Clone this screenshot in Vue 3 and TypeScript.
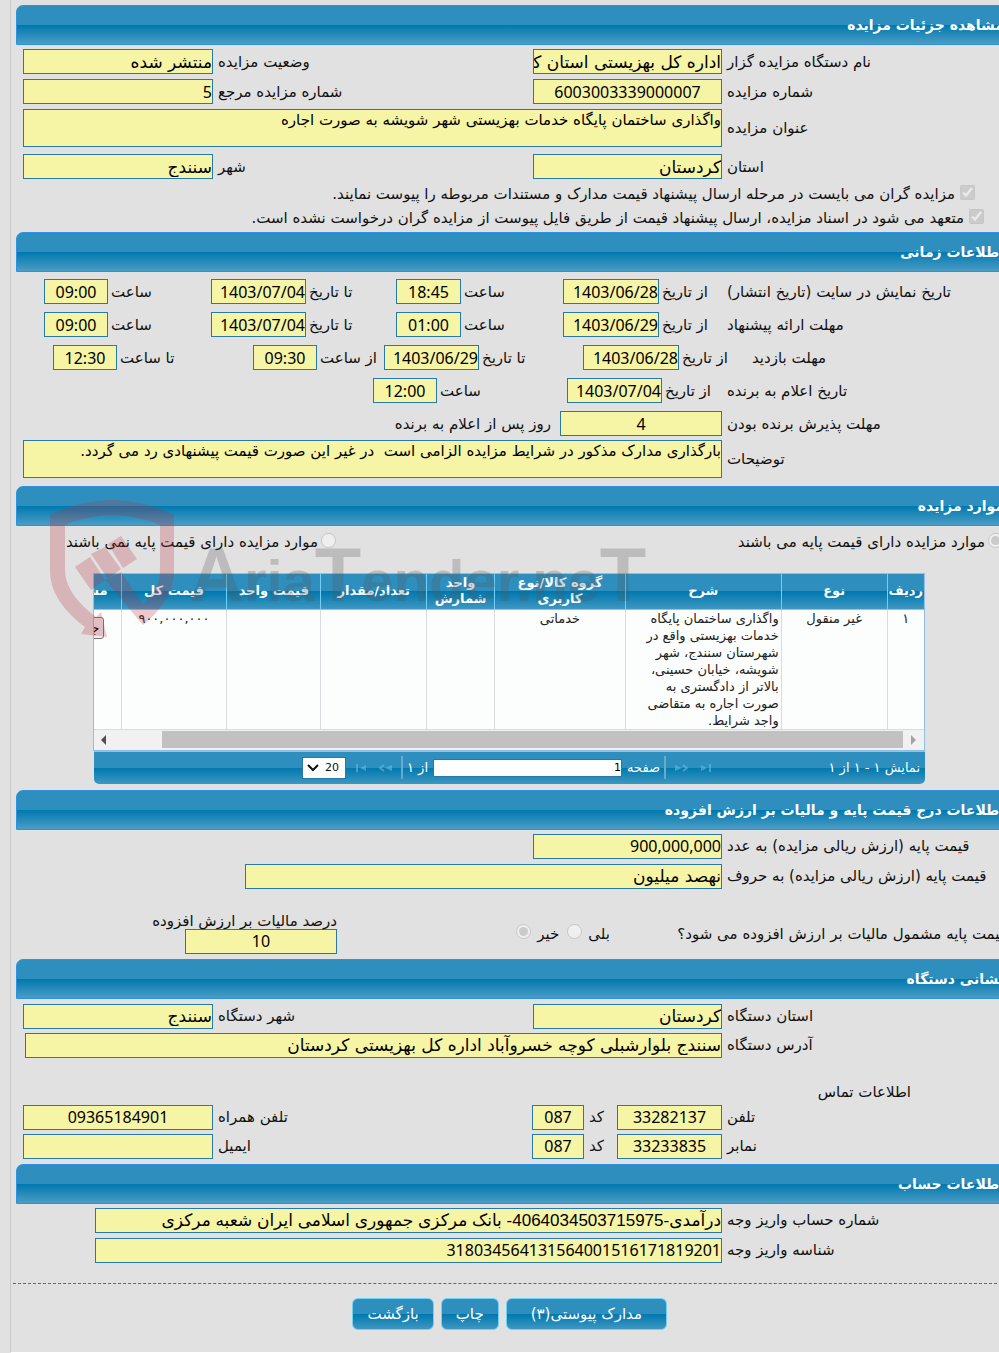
<script setup lang="ts">
interface Field {
  label: string
  value: string
  kind?: 'center' | 'area' | 'date' | 'digits' | 'mixed'
}
interface Row {
  layout: string
  fields: Field[]
  suffix?: string
}

const general: Row[] = [
  {
    layout: 'pair',
    fields: [
      { label: 'نام دستگاه مزایده گزار', value: 'اداره کل بهزیستی استان کردستان' },
      { label: 'وضعیت مزایده', value: 'منتشر شده' },
    ],
  },
  {
    layout: 'pair',
    fields: [
      { label: 'شماره مزایده', value: '6003003339000007', kind: 'center' },
      { label: 'شماره مزایده مرجع', value: '5', kind: 'digits' },
    ],
  },
  {
    layout: 'wide',
    fields: [{ label: 'عنوان مزایده', value: 'واگذاری ساختمان پایگاه خدمات بهزیستی شهر شویشه به صورت اجاره', kind: 'area' }],
  },
  {
    layout: 'pair spaced',
    fields: [
      { label: 'استان', value: 'کردستان' },
      { label: 'شهر', value: 'سنندج' },
    ],
  },
]

const times: Row[] = [
  {
    layout: 'span',
    fields: [
      { label: 'از تاریخ', value: '1403/06/28', kind: 'date' },
      { label: 'ساعت', value: '18:45', kind: 'center' },
      { label: 'تا تاریخ', value: '1403/07/04', kind: 'date' },
      { label: 'ساعت', value: '09:00', kind: 'center' },
    ],
  },
  {
    layout: 'span',
    fields: [
      { label: 'از تاریخ', value: '1403/06/29', kind: 'date' },
      { label: 'ساعت', value: '01:00', kind: 'center' },
      { label: 'تا تاریخ', value: '1403/07/04', kind: 'date' },
      { label: 'ساعت', value: '09:00', kind: 'center' },
    ],
  },
  {
    layout: 'visit',
    fields: [
      { label: 'از تاریخ', value: '1403/06/28', kind: 'date' },
      { label: 'تا تاریخ', value: '1403/06/29', kind: 'date' },
      { label: 'از ساعت', value: '09:30', kind: 'center' },
      { label: 'تا ساعت', value: '12:30', kind: 'center' },
    ],
  },
  {
    layout: 'announce',
    fields: [
      { label: 'از تاریخ', value: '1403/07/04', kind: 'date' },
      { label: 'ساعت', value: '12:00', kind: 'center' },
    ],
  },
]
const timeTitles = ['تاریخ نمایش در سایت (تاریخ انتشار)', 'مهلت ارائه پیشنهاد', 'مهلت بازدید', 'تاریخ اعلام به برنده']

const notes: Row[] = [
  {
    layout: 'accept',
    fields: [{ label: 'مهلت پذیرش برنده بودن', value: '4', kind: 'center' }],
    suffix: 'روز پس از اعلام به برنده',
  },
  {
    layout: 'wide',
    fields: [
      {
        label: 'توضیحات',
        value: 'بارگذاری مدارک مذکور در شرایط مزایده الزامی است  در غیر این صورت قیمت پیشنهادی رد می گردد.',
        kind: 'area',
      },
    ],
  },
]

const prices: Row[] = [
  { layout: 'single', fields: [{ label: 'قیمت پایه (ارزش ریالی مزایده) به عدد', value: '900,000,000', kind: 'digits' }] },
  { layout: 'words', fields: [{ label: 'قیمت پایه (ارزش ریالی مزایده) به حروف', value: 'نهصد میلیون' }] },
]

const address: Row[] = [
  {
    layout: 'pair',
    fields: [
      { label: 'استان دستگاه', value: 'کردستان' },
      { label: 'شهر دستگاه', value: 'سنندج' },
    ],
  },
  {
    layout: 'street',
    fields: [{ label: 'آدرس دستگاه', value: 'سنندج بلوارشبلی کوچه خسروآباد اداره کل بهزیستی کردستان' }],
  },
]

const contact: Row[] = [
  {
    layout: 'phone',
    fields: [
      { label: 'تلفن', value: '33282137', kind: 'center' },
      { label: 'کد', value: '087', kind: 'center' },
      { label: 'تلفن همراه', value: '09365184901', kind: 'center' },
    ],
  },
  {
    layout: 'phone',
    fields: [
      { label: 'نمابر', value: '33233835', kind: 'center' },
      { label: 'کد', value: '087', kind: 'center' },
      { label: 'ایمیل', value: '', kind: 'center' },
    ],
  },
]

const account: Row[] = [
  {
    layout: 'deposit',
    fields: [
      {
        label: 'شماره حساب واریز وجه',
        value: 'درآمدی-4064034503715975- بانک مرکزی جمهوری اسلامی ایران شعبه مرکزی',
        kind: 'mixed',
      },
    ],
  },
  { layout: 'deposit', fields: [{ label: 'شناسه واریز وجه', value: '318034564131564001516171819201', kind: 'digits' }] },
]

const groups = { general, notes, prices, address, contact, account }
type GroupName = keyof typeof groups
interface Block {
  title: string
  name: string
  parts: GroupName[]
}
const blocks: Block[] = [
  { title: 'مشاهده جزئیات مزایده', name: 'general', parts: ['general'] },
  { title: 'اطلاعات زمانی', name: 'times', parts: ['notes'] },
  { title: 'موارد مزایده', name: 'items', parts: [] },
  { title: 'اطلاعات درج قیمت پایه و مالیات بر ارزش افزوده', name: 'price', parts: ['prices'] },
  { title: 'نشانی دستگاه', name: 'address', parts: ['address', 'contact'] },
  { title: 'اطلاعات حساب', name: 'account', parts: ['account'] },
]

const columns = [
  { title: 'ردیف', width: 37, value: '۱' },
  { title: 'نوع', width: 106, value: 'غیر منقول' },
  {
    title: 'شرح',
    width: 156,
    value:
      'واگذاری ساختمان پایگاه خدمات بهزیستی واقع در شهرستان سنندج، شهر شویشه، خیابان حسینی، بالاتر از دادگستری به صورت اجاره به متقاضی واجد شرایط.',
  },
  { title: 'گروه کالا/نوع کاربری', width: 131, value: 'خدماتی' },
  { title: 'واحد شمارش', width: 68, value: '' },
  { title: 'تعداد/مقدار', width: 106, value: '' },
  { title: 'قیمت واحد', width: 94, value: '' },
  { title: 'قیمت کل', width: 106, value: '۹۰۰,۰۰۰,۰۰۰' },
  { title: 'مشاهده', width: 27, value: '' },
]
const total = columns.reduce((sum, c) => sum + c.width, 0)
</script>

<template>
  <div class="page" dir="rtl">
    <main class="sheet">
      <section v-for="b in blocks" :key="b.name" :class="['block', b.name]">
        <h2 class="bar">{{ b.title }}</h2>

        <template v-if="b.name === 'times'">
          <div v-for="(row, r) in times" :key="r" :class="['row', row.layout]">
            <span class="label">{{ timeTitles[r] }}</span>
            <template v-for="(f, i) in row.fields" :key="i">
              <label class="label near" :for="`time-${r}-${i}`">{{ f.label }}</label>
              <input :id="`time-${r}-${i}`" :class="['field', f.kind]" :value="f.value" readonly />
            </template>
          </div>
        </template>

        <template v-if="b.name === 'items'">
          <div class="choice">
            <label class="has"><input type="radio" name="base" checked disabled />موارد مزایده دارای قیمت پایه می باشند</label>
            <label><input type="radio" name="base" disabled />موارد مزایده دارای قیمت پایه نمی باشند</label>
          </div>
          <div class="grid">
            <div class="frame">
              <table>
                <colgroup>
                  <col v-for="c in columns" :key="c.title" :style="{ width: (c.width / total) * 100 + '%' }" />
                </colgroup>
                <thead>
                  <tr>
                    <th v-for="c in columns" :key="c.title" scope="col">{{ c.title }}</th>
                  </tr>
                </thead>
                <tbody>
                  <tr>
                    <td v-for="(c, i) in columns" :key="c.title">
                      <button v-if="i === columns.length - 1" type="button" class="detail">جزئیات</button>
                      <template v-else>{{ c.value }}</template>
                    </td>
                  </tr>
                </tbody>
              </table>
              <div class="scroll">
                <svg width="18" height="20" viewBox="0 0 18 20"><path d="M5 5l5 5-5 5z" fill="#a3a3a3" /></svg>
                <span class="thumb"></span>
                <svg class="end" width="18" height="20" viewBox="0 0 18 20"><path d="M12 5l-5 5 5 5z" fill="#505050" /></svg>
              </div>
            </div>
            <div class="pager">
              <span class="count">نمایش ۱ - ۱ از ۱</span>
              <button type="button" class="nav" aria-label="صفحه اول" disabled>
                <svg width="14" height="10" viewBox="0 0 14 10"><path d="M2 2l6 3-6 3zM10 1h2v8h-2z" fill="#6db9e0" /></svg>
              </button>
              <button type="button" class="nav" aria-label="صفحه قبل" disabled>
                <svg width="14" height="10" viewBox="0 0 14 10"><path d="M0 2l7 3-7 3z" fill="#6db9e0" /><path d="M8 2l4 3-4 3" fill="none" stroke="#6db9e0" stroke-width="2" /></svg>
              </button>
              <i class="sep"></i>
              <label for="page-no">صفحه</label>
              <input id="page-no" class="number" value="1" />
              <span>از ۱</span>
              <i class="sep"></i>
              <button type="button" class="nav" aria-label="صفحه بعد" disabled>
                <svg width="14" height="10" viewBox="0 0 14 10"><path d="M14 2L7 5l7 3z" fill="#6db9e0" /><path d="M6 2L2 5l4 3" fill="none" stroke="#6db9e0" stroke-width="2" /></svg>
              </button>
              <button type="button" class="nav" aria-label="صفحه آخر" disabled>
                <svg width="14" height="10" viewBox="0 0 14 10"><path d="M12 2L6 5l6 3zM2 1h2v8H2z" fill="#6db9e0" /></svg>
              </button>
              <span class="size">
                <select aria-label="تعداد در صفحه"><option>20</option></select>
                <svg width="12" height="8" viewBox="0 0 12 8"><path d="M1 1l5 5 5-5" fill="none" stroke="#111" stroke-width="2" /></svg>
              </span>
            </div>
          </div>
        </template>

        <template v-for="part in b.parts" :key="part">
          <p v-if="part === 'contact'" class="subtitle">اطلاعات تماس</p>
          <div v-for="(row, r) in groups[part]" :key="r" :class="['row', row.layout]">
            <template v-for="(f, i) in row.fields" :key="i">
              <label class="label" :for="`${part}-${r}-${i}`">{{ f.label }}</label>
              <textarea v-if="f.kind === 'area'" :id="`${part}-${r}-${i}`" class="field area" :value="f.value" readonly></textarea>
              <input v-else :id="`${part}-${r}-${i}`" :class="['field', f.kind]" :value="f.value" readonly />
            </template>
            <span v-if="row.suffix" class="suffix">{{ row.suffix }}</span>
          </div>
        </template>

        <div v-if="b.name === 'general'" class="checks">
          <label class="first"><input type="checkbox" checked disabled />مزایده گران می بایست در مرحله ارسال پیشنهاد قیمت مدارک و مستندات مربوطه را پیوست نمایند.</label>
          <label><input type="checkbox" checked disabled />متعهد می شود در اسناد مزایده، ارسال پیشنهاد قیمت از طریق فایل پیوست از مزایده گران درخواست نشده است.</label>
        </div>

        <div v-if="b.name === 'price'" class="vat">
          <span class="question">قیمت پایه مشمول مالیات بر ارزش افزوده می شود؟</span>
          <span class="options">
            <label for="vat-yes">بلی</label><input id="vat-yes" type="radio" name="vat" disabled />
            <label for="vat-no">خیر</label><input id="vat-no" type="radio" name="vat" checked disabled />
          </span>
          <span class="percent">
            <label for="vat-percent">درصد مالیات بر ارزش افزوده</label>
            <input id="vat-percent" class="field center" value="10" readonly />
          </span>
        </div>
      </section>

      <svg class="mark" width="650" height="146" viewBox="0 0 650 146" aria-hidden="true">
        <g fill="#b8303c" opacity=".25">
          <path d="M26 20Q88-10 150 20V75C150 98 138 114 119 130L81 85 97 77 119 109C131 98 136 88 136 75V30Q88 10 41 30V75C41 93 55 109 72 122L77 117 83 142 57 139 61 132C40 116 26 98 26 75Z" />
          <path d="M51 72L66 62 81 85 67 95Z" />
          <path d="M67 59L81 52 97 74 84 84Z" />
          <path d="M84 49L97 41 113 64 99 73Z" />
        </g>
        <text class="mark-text" x="165" y="106"><tspan class="cap">A</tspan>ria<tspan class="cap">T</tspan>ender.ne<tspan class="cap">T</tspan></text>
      </svg>

      <footer class="actions">
        <button type="button" class="btn attach">مدارک پیوستی(۳)</button>
        <button type="button" class="btn">چاپ</button>
        <button type="button" class="btn">بازگشت</button>
      </footer>
    </main>
  </div>
</template>

<style>
body {
  background: #e1e1e1;
}
</style>

<style scoped>
* {
  box-sizing: border-box;
}
.page {
  margin-left: 10px;
  padding: 5px 0 22px 5px;
  border-left: 1px solid #c8c8c8;
  border-bottom: 1px solid #fff;
  overflow: hidden;
  background: #e1e1e1;
  color: #111;
  font-family: 'DejaVu Sans', sans-serif;
  font-size: 15px;
  line-height: 20px;
}
.page input,
.page textarea,
.page button,
.page select {
  font-family: inherit;
}
.sheet {
  position: relative;
  margin-right: -8px;
}
.bar {
  height: 40px;
  margin: 0 0 4px;
  padding: 0 2px;
  border: 1px solid #2e92e0;
  border-radius: 7px 0 0 0;
  background: linear-gradient(#2e8fbe 50%, #0078ae 50%, #4a9dc5);
  color: #fff;
  font-size: 14px;
  font-weight: bold;
  line-height: 38px;
}
.row {
  display: grid;
  align-items: center;
  margin-bottom: 5px;
  padding-left: 7px;
}
.pair {
  grid-template-columns: 285fr 189fr 320fr 190fr;
}
.wide {
  grid-template-columns: 285fr 699fr;
}
.street {
  grid-template-columns: 285fr 697fr 2fr;
}
.spaced {
  margin-top: 7px;
  margin-bottom: 1px;
}
.span {
  grid-template-columns: 285fr 63fr 96fr 102fr 65fr 90fr 95fr 103fr 64fr 21fr;
}
.visit {
  grid-template-columns: 260fr 68fr 96fr 104fr 95fr 67fr 64fr 136fr 64fr 30fr;
}
.announce {
  grid-template-columns: 285fr 60fr 95fr 130fr 64fr 350fr;
}
.accept {
  grid-template-columns: 285fr 162fr 537fr;
}
.single {
  grid-template-columns: 285fr 189fr 510fr;
}
.words {
  grid-template-columns: 285fr 477fr 222fr;
}
.phone {
  grid-template-columns: 285fr 105fr 33fr 52fr 319fr 190fr;
}
.deposit {
  grid-template-columns: 285fr 627fr 72fr;
}
.times .bar {
  margin-bottom: 7px;
}
.span,
.visit,
.announce {
  margin-bottom: 8px;
}
.accept,
.address .row {
  margin-bottom: 4px;
}
.times .wide {
  margin-bottom: 8px;
}
.address .bar {
  margin-bottom: 5px;
}
.address .phone:last-child {
  margin-bottom: 5px;
}
.label {
  min-width: 0;
  padding-left: 5px;
  direction: rtl;
  text-align: left;
  white-space: nowrap;
}
.near {
  padding-left: 3px;
}
.suffix {
  padding-right: 9px;
}
.field {
  display: block;
  width: 100%;
  min-width: 0;
  height: 25px;
  margin: 0;
  padding: 0;
  border: 1px solid #2779aa;
  border-radius: 0;
  outline: 0;
  background: #f6f4a5;
  color: #000;
  font-size: 17px;
  text-align: right;
}
.page .center,
.page .date,
.page .digits {
  font-family: 'Noto Sans', 'DejaVu Sans', sans-serif;
  font-size: 16px;
}
.page .mixed {
  font-family: 'Liberation Sans', 'DejaVu Sans', sans-serif;
}
.page .center {
  text-align: center;
}
.page .area {
  height: 38px;
  resize: none;
  overflow: hidden;
  font-size: 15px;
  line-height: 20px;
}
input[type='checkbox'],
input[type='radio'] {
  flex: none;
  width: 15px;
  height: 15px;
  margin: 0 0 4px;
}
.checks {
  padding-bottom: 4px;
}
.checks label {
  display: flex;
  align-items: center;
  gap: 5px;
  height: 24px;
  padding: 4px 23px 0 0;
  white-space: nowrap;
}
.checks .first {
  padding-right: 32px;
}
.choice {
  display: grid;
  grid-template-columns: 671fr 320fr;
  height: 43px;
}
.choice label {
  display: flex;
  align-items: center;
  gap: 3px;
  height: 24px;
  white-space: nowrap;
}
.choice .has {
  padding-right: 4px;
}
.grid {
  margin: 0 82px 6px 77px;
}
.frame {
  border: 1px solid #8fbfe6;
  background: #fcfdfd;
  overflow: hidden;
}
table {
  width: 100%;
  border-collapse: collapse;
  table-layout: fixed;
}
thead tr {
  height: 35px;
  background: linear-gradient(#2e8fbe 50%, #0078ae 50%, #3e97c2);
}
th {
  padding: 0;
  border-left: 1px solid #70d0f5;
  border-bottom: 1px solid #70d0f5;
  color: #fff;
  font-size: 13px;
  font-weight: bold;
  line-height: 16px;
}
td {
  height: 120px;
  padding: 0 2px;
  border-left: 1px solid #d8dcdf;
  border-bottom: 1px solid #d8dcdf;
  color: #222;
  font-size: 13px;
  line-height: 17px;
  text-align: center;
  vertical-align: top;
}
td:nth-child(3) {
  text-align: right;
}
th:last-child,
td:last-child {
  border-left: 0;
  padding-right: 13px;
  overflow: hidden;
  text-align: right;
  white-space: nowrap;
}
td:last-child {
  padding: 7px 17px 0 0;
}
.detail {
  height: 22px;
  padding: 0 3px;
  border: 1px solid #767676;
  border-radius: 3px;
  background: #efefef;
  color: #000;
  font-size: 14px;
}
.scroll {
  display: flex;
  align-items: center;
  height: 20px;
  background: #f1f1f1;
}
.thumb {
  flex: 0 1 741px;
  height: 17px;
  margin-right: 3px;
  background: #c1c1c1;
}
.end {
  margin-right: auto;
}
.pager {
  display: flex;
  align-items: center;
  height: 33px;
  margin-left: 1px;
  padding: 0 5px;
  border-top: 1px solid #70d0f5;
  border-radius: 0 0 5px 5px;
  background: linear-gradient(#2e8fbe 50%, #0078ae 50%, #3e97c2);
  color: #fff;
  font-size: 13px;
}
.count {
  flex: 0 0 202px;
}
.nav {
  width: 24px;
  height: 20px;
  padding: 0;
  border: 0;
  background: none;
  line-height: 0;
  opacity: 0.6;
}
.sep {
  width: 2px;
  height: 23px;
  margin: 0 4px;
  background: #6aa9cc;
}
.number {
  width: 189px;
  height: 18px;
  margin: 0 5px;
  padding: 0;
  border: 1px solid #2779aa;
  background: #fff;
  font-size: 11px;
}
.size {
  display: grid;
  align-items: center;
  margin-right: 3px;
}
.size > * {
  grid-area: 1 / 1;
}
.size select {
  width: 44px;
  height: 22px;
  padding: 0 6px;
  border: 1px solid #2779aa;
  appearance: none;
  background: #fff;
  color: #111;
  font-size: 11px;
}
.size svg {
  justify-self: end;
  margin-left: 5px;
  pointer-events: none;
}
.vat {
  display: grid;
  grid-template-columns: 397fr 273fr 152fr 169fr;
  align-items: end;
  height: 65px;
  padding-bottom: 5px;
  white-space: nowrap;
}
.question,
.options {
  height: 30px;
}
.options {
  display: flex;
  align-items: flex-start;
}
.options input {
  margin: 0 6px 0 8px;
}
.percent {
  min-width: 0;
  line-height: 16px;
}
.subtitle {
  height: 47px;
  margin: -4px 0 0;
  padding: 24px 96px 0 0;
}
.mark {
  position: absolute;
  top: 490px;
  left: 8px;
  pointer-events: none;
}
.mark-text {
  direction: ltr;
  fill: #555;
  fill-opacity: 0.26;
  font-family: 'Liberation Sans', sans-serif;
  font-size: 58px;
  font-weight: bold;
}
.cap {
  font-size: 76px;
}
.actions {
  display: flex;
  justify-content: flex-start;
  gap: 7px;
  margin: 20px 5px 0 -3px;
  padding: 14px 335px 0 0;
  border-top: 1px dashed #2779aa;
}
.btn {
  height: 32px;
  padding: 0 14px;
  border: 1px solid #70d0f5;
  border-radius: 6px;
  background: linear-gradient(#2e8fbe 50%, #0078ae 50%, #3e97c2);
  color: #fff;
  font-size: 15px;
}
.attach {
  padding: 0 24px;
}
</style>
